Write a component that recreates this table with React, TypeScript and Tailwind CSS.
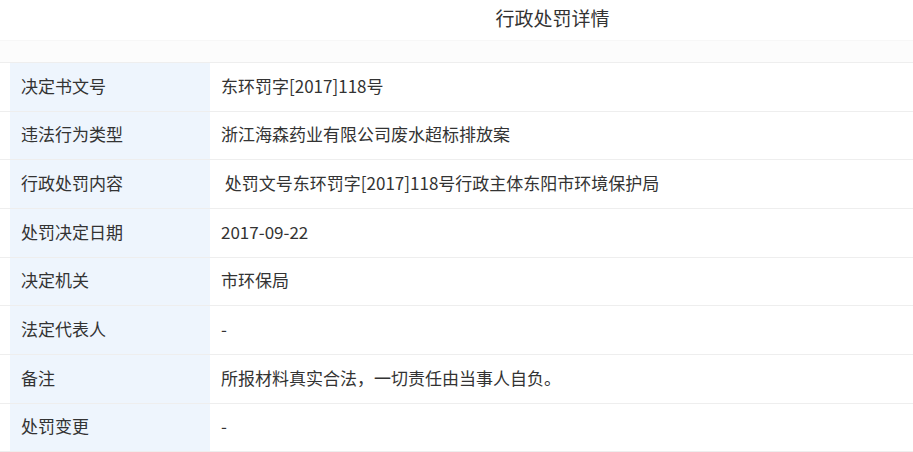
import React from "react";

const rows: [string, string][] = [
  ["决定书文号", "东环罚字[2017]118号"],
  ["违法行为类型", "浙江海森药业有限公司废水超标排放案"],
  ["行政处罚内容", " 处罚文号东环罚字[2017]118号行政主体东阳市环境保护局"],
  ["处罚决定日期", "2017-09-22"],
  ["决定机关", "市环保局"],
  ["法定代表人", "-"],
  ["备注", "所报材料真实合法，一切责任由当事人自负。"],
  ["处罚变更", "-"],
];

export default function App() {
  return (
    <div
      className="w-[913px] h-[452px] overflow-hidden bg-white text-[#333]"
      style={{ fontFamily: '"Microsoft YaHei", "Noto Sans CJK SC", "Liberation Sans", sans-serif' }}
    >
      <div className="h-[40px] flex items-center justify-center pl-[192px] pb-[6px] text-[19px] text-[#333] leading-none">
        行政处罚详情
      </div>
      <div className="h-[22px] bg-[#fcfcfc] border-t border-[#f7f7f7]" />
      <div className="border-t border-[#eeeeee]">
        {rows.map(([k, v], i) => (
          <div key={i} className="flex h-[48.67px] border-b border-[#eeeeee]">
            <div className="ml-[10px] w-[200px] bg-[#eef5fd] flex items-center pl-[11px] pb-[3px] text-[17px] text-[#333]">
              {k}
            </div>
            <div className="flex-1 flex items-center pl-[11px] pb-[3px] text-[17px] text-[#333] whitespace-pre">
              {v}
            </div>
          </div>
        ))}
      </div>
    </div>
  );
}
